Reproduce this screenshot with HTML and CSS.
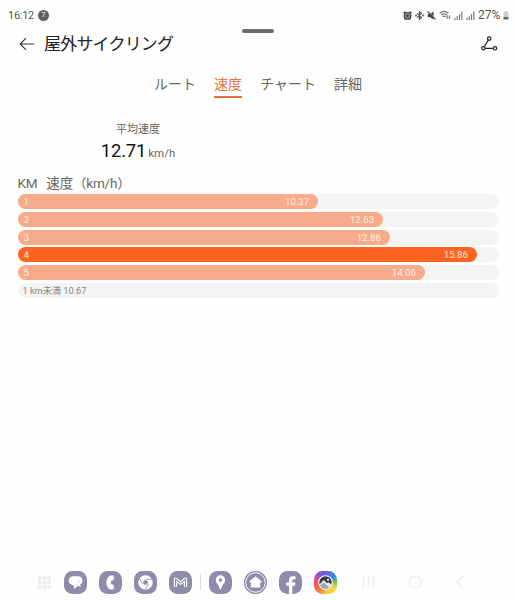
FILE: index.html
```html
<!DOCTYPE html>
<html lang="ja">
<head>
    <meta charset="UTF-8">
    <meta name="viewport" content="width=device-width, initial-scale=1.0">
    <title>屋外サイクリング</title>
    <link rel="stylesheet" href="styles.css">
</head>
<body>
    <div class="drag-handle"></div>

    <!-- Status bar -->
    <div class="status-bar">
        <div class="status-left">
            <span class="clock">16:12</span>
            <span class="notice">7</span>
        </div>
        <div class="status-right">
            <svg class="alarm" width="9" height="9" viewBox="0 0 9 9"><circle cx="4.5" cy="4.8" r="3.9" fill="#444"/><path d="M.6 2.2L2.4.6M8.4 2.2L6.6.6M1.6 8.6l1-1M7.4 8.6l-1-1" stroke="#444" stroke-width="1.4"/><circle cx="4.5" cy="4.8" r="2.1" fill="none" stroke="#ddd" stroke-width=".7"/></svg>
            <svg class="bluetooth" width="9" height="9" viewBox="0 0 9 9"><path d="M2 2.4l4.5 4L4.4 8.3V.7l2.1 1.9L2 6.6" fill="none" stroke="#555" stroke-width="1.2"/><circle cx="1" cy="4.5" r=".9" fill="#555"/><circle cx="8" cy="4.5" r=".9" fill="#555"/></svg>
            <svg class="mute" width="9" height="9" viewBox="0 0 9 9"><path d="M.8 3h2.2L6.6.6v8L3 6.2H.8z" fill="#444"/><path d="M1.2.2l8 8" stroke="#fefefe" stroke-width=".7"/><path d="M.5.4l8 8" stroke="#444" stroke-width="1.2"/></svg>
            <svg class="wifi" width="12" height="10" viewBox="0 0 12 10"><path d="M.7 3.2q4.3-3.8 8.8 0M2.2 5q2.9-2.4 5.8 0M3.8 6.7q1.3-1 2.6 0" fill="none" stroke="#777" stroke-width="1.2"/><path d="M8.2 9V5.5L7 6.7M10.3 5.2v3.5l1.2-1.2" fill="none" stroke="#666" stroke-width=".9"/></svg>
            <svg class="signal" width="9" height="9" viewBox="0 0 9 9"><path d="M1 9V7M3.2 9V5.3M5.5 9V3M7.8 9V.5" stroke="#777" stroke-width="1.2"/></svg>
            <svg class="signal" width="9" height="9" viewBox="0 0 9 9"><path d="M1 9V7M3.2 9V5.3M5.5 9V3M7.8 9V.5" stroke="#777" stroke-width="1.2"/></svg>
            <span class="battery-text">27%</span>
            <svg class="battery" width="6" height="9" viewBox="0 0 6 9"><path d="M2 0h2v1h1.3v5H.7V1H2z" fill="#ccc"/><path d="M.5 6h5v2.5h-5z" fill="#666"/></svg>
        </div>
    </div>

    <!-- Header -->
    <header class="header">
        <svg class="back" width="16" height="14" viewBox="0 0 16 14"><path d="M15 7H1.3M7 1.2L1.2 7 7 12.8" fill="none" stroke="#333" stroke-width="1.1"/></svg>
        <h1>屋外サイクリング</h1>
        <svg class="track" width="18" height="16" viewBox="0 0 18 16"><g fill="none" stroke="#222" stroke-width="1.2"><circle cx="9.2" cy="2.6" r="1.7"/><circle cx="3.4" cy="12.3" r="1.7"/><circle cx="15" cy="12.3" r="1.7"/><path d="M8.3 4.1l-4 6.7M5.1 12.3h8.2"/></g></svg>
    </header>

    <!-- Tabs -->
    <nav class="tabs">
        <span class="tab">ルート</span>
        <span class="tab active">速度</span>
        <span class="tab">チャート</span>
        <span class="tab">詳細</span>
    </nav>

    <main class="content">
        <div class="average">
            <div class="average-label">平均速度</div>
            <div class="average-value">12.71<span class="unit">km/h</span></div>
        </div>

        <div class="list-title"><span>KM</span><span>速度（km/h）</span></div>

        <!-- Splits -->
        <div class="splits">
            <div class="row"><div class="bar" style="width: 62.5%"><span>1</span><span>10.37</span></div></div>
            <div class="row"><div class="bar" style="width: 76%"><span>2</span><span>12.63</span></div></div>
            <div class="row"><div class="bar" style="width: 77.4%"><span>3</span><span>12.86</span></div></div>
            <div class="row"><div class="bar fastest" style="width: 95.5%"><span>4</span><span>15.86</span></div></div>
            <div class="row"><div class="bar" style="width: 84.7%"><span>5</span><span>14.06</span></div></div>
            <div class="row rest">1 km未満 10.67</div>
        </div>
    </main>

    <!-- Taskbar -->
    <footer class="taskbar">
        <svg class="apps" width="15" height="15" viewBox="0 0 15 15"><path d="M1 3h13M1 7.5h13M1 12h13" stroke="#ececec" stroke-width="3.4" stroke-dasharray="3.6 1.1"/></svg>

        <svg class="app" viewBox="0 0 23 23"><rect width="23" height="23" rx="8.5" fill="#8d8cab"/><path d="M9.5 5.3h4.6a4.3 4.3 0 0 1 2.2 8l.5 2.6-3-1.2-3.6 3.4-.4-3.4-3.3-1.8A4.2 4.2 0 0 1 9.5 5.3z" fill="#fff"/><path d="M14.8 9q1.2 3.8-3 4.7" fill="none" stroke="#c9c8d9" stroke-width=".7"/></svg>
        <svg class="app" viewBox="0 0 23 23"><rect width="23" height="23" rx="8.5" fill="#8d8cab"/><path d="M11 4.5h2.6q1.2 0 1.2 1.2v2.6q0 1.1-1.1 1.1h-1.4q-.6 2.1 0 4.2h1.4q1.1 0 1.1 1.1v2.6q0 1.2-1.2 1.2H11Q7.4 16 7.4 11.5T11 4.5z" fill="#fff"/></svg>
        <svg class="app" viewBox="0 0 23 23"><rect width="23" height="23" rx="8.5" fill="#8d8cab"/><circle cx="11.5" cy="11.5" r="7.2" fill="#fff"/><path d="M11.5 8.3h6.5M8.7 13.1L5.5 7.6M14.3 13.1l-3.1 5.5" stroke="#8d8cab" stroke-width=".9"/><circle cx="11.5" cy="11.5" r="2.8" fill="#8d8cab" stroke="#fff" stroke-width=".8"/></svg>
        <svg class="app" viewBox="0 0 23 23"><rect width="23" height="23" rx="8.5" fill="#8d8cab"/><path d="M6.5 15.8V8l5 4.1 5-4.1v7.8" fill="none" stroke="#fff" stroke-width="3.4" stroke-linejoin="round"/><path d="M6.5 15.5V8l5 4.1 5-4.1v7.5" fill="none" stroke="#8d8cab" stroke-width="1.1"/></svg>

        <span class="divider"></span>

        <svg class="app" viewBox="0 0 23 23"><rect width="23" height="23" rx="8.5" fill="#8d8cab"/><path d="M11.5 4.3a4.7 4.7 0 0 1 4.7 4.7c0 3.4-3.4 4.4-4.2 9.5h-1c-.8-5.1-4.2-6.1-4.2-9.5a4.7 4.7 0 0 1 4.7-4.7z" fill="#fff"/><circle cx="11.5" cy="9" r="1.7" fill="#8d8cab"/></svg>
        <svg class="app" viewBox="0 0 23 23"><circle cx="11.5" cy="11.5" r="11.5" fill="#8d8cab"/><circle cx="11.5" cy="11.5" r="9.8" fill="none" stroke="#fff" stroke-width="1"/><path d="M11.5 5.2l6.3 5.3-1 1.1-.6-.4v5.3H6.8v-5.3l-.6.4-1-1.1z" fill="#fff"/></svg>
        <svg class="app" viewBox="0 0 23 23"><rect width="23" height="23" rx="8.5" fill="#8d8cab"/><path d="M10 23v-8.3H7.2v-3.2H10V9.2q0-4 4.2-4h2.3v3h-1.7q-1.5 0-1.5 1.5v1.8h3.2l-.6 3.2h-2.6V23z" fill="#fff"/></svg>
        <div class="app gallery">
            <svg width="15" height="15" viewBox="0 0 15 15"><circle cx="7.5" cy="7.5" r="7.3" fill="#fff"/><circle cx="7.5" cy="7.5" r="6.2" fill="#34394c"/><circle cx="10" cy="4.8" r="1.1" fill="#fff"/><path d="M1.6 9.2L5.8 5l3.1 3.3 1.6-1.1 2.9 2.2a6.2 6.2 0 0 1-11.8-.2z" fill="#e6e8ed"/><path d="M2.2 10.5l3.6-3 5.6 4.9a6.2 6.2 0 0 1-9.2-1.9z" fill="#9fa4b2"/></svg>
        </div>

        <div class="nav-keys">
            <svg width="13" height="14" viewBox="0 0 13 14"><path d="M1.5 1v12M6.5 1v12M11.5 1v12" stroke="#efefef" stroke-width="1.8"/></svg>
            <svg width="14" height="14" viewBox="0 0 14 14"><rect x="1.5" y="1.5" width="11" height="11" rx="3.5" fill="none" stroke="#efefef" stroke-width="1.6"/></svg>
            <svg width="9" height="14" viewBox="0 0 9 14"><path d="M8 1L2 7l6 6" fill="none" stroke="#efefef" stroke-width="1.6"/></svg>
        </div>
    </footer>
</body>
</html>
```

FILE: styles.css
```css
/* Basic Styles */
* {
    box-sizing: border-box;
}

body {
    font-family: Roboto, "Noto Sans CJK JP", sans-serif;
    margin: 0;
    height: 600px;
    display: flex;
    flex-direction: column;
    background-color: #fefefe;
    color: #666;
    overflow: hidden;
}

svg {
    display: block;
    flex: none;
}

.drag-handle {
    position: absolute;
    top: 29px;
    left: 242px;
    width: 32px;
    height: 4px;
    border-radius: 2px;
    background-color: #6b6b6b;
}

/* Status Bar */
.status-bar {
    height: 30px;
    padding: 0 7px 0 8px;
    display: flex;
    justify-content: space-between;
    align-items: center;
    font-size: 11px;
    color: #555;
}

.status-left,
.status-right {
    display: flex;
    align-items: center;
}

.status-left {
    gap: 4px;
}

.clock {
    width: 26px;
    font-size: 11px;
    letter-spacing: -0.3px;
}

.notice {
    width: 11px;
    height: 11px;
    border-radius: 50%;
    background-color: #606060;
    color: white;
    font-size: 7px;
    line-height: 11px;
    text-align: center;
}

.status-right {
    gap: 3px;
}

.battery-text {
    width: 24px;
    font-size: 12px;
}

.battery {
    margin-left: -2px;
}

/* Header */
.header {
    height: 28px;
    padding: 0 18px 0 19px;
    display: flex;
    align-items: center;
}

.header h1 {
    margin: 0 0 0 9px;
    flex: 1;
    font-size: 17px;
    line-height: 28px;
    font-weight: 400;
    letter-spacing: -0.8px;
    color: #222;
}

/* Tabs */
.tabs {
    height: 40px;
    margin-top: 15px;
    display: flex;
    justify-content: center;
    align-items: flex-start;
    gap: 18px;
}

.tab {
    height: 25px;
    font-size: 14px;
    line-height: 23px;
}

.tab.active {
    color: #e8703c;
    border-bottom: 2px solid #e8703c;
}

/* Average Speed */
.content {
    padding: 8px 17.5px 0;
    flex: 1;
}

.average {
    width: 241px;
    text-align: center;
}

.average-label {
    font-size: 11px;
    line-height: 17px;
}

.average-value {
    margin-top: 1px;
    font-size: 18.5px;
    line-height: 24px;
    letter-spacing: -0.2px;
    color: #111;
}

.unit {
    margin-left: 2px;
    font-size: 11.5px;
    letter-spacing: 0;
    color: #666;
}

/* Splits */
.list-title {
    margin-top: 8px;
    display: flex;
    gap: 9px;
    font-size: 13.5px;
    line-height: 20px;
    letter-spacing: -0.2px;
}

.splits {
    margin-top: 1px;
    display: flex;
    flex-direction: column;
    gap: 2.8px;
}

.row {
    height: 15px;
    border-radius: 8px;
    background-color: #f4f4f4;
}

.bar {
    height: 15px;
    padding: 0 9px 0 6px;
    border-radius: 8px;
    display: flex;
    justify-content: space-between;
    background-color: #f8ab8a;
    color: #fff0e8;
    font-size: 9.6px;
    line-height: 16px;
}

.bar.fastest {
    background-color: #fc6420;
    color: #ffe6da;
}

.rest {
    padding-left: 5px;
    color: #888;
    font-size: 9.2px;
    line-height: 15px;
}

/* Taskbar */
.taskbar {
    height: 36px;
    padding-left: 37px;
    display: flex;
    align-items: center;
    gap: 12px;
}

.app {
    width: 23px;
    height: 23px;
    flex: none;
}

.divider {
    width: 1px;
    height: 16px;
    margin: 0 -4px;
    background-color: #ddd;
}

.gallery {
    border-radius: 8.5px;
    display: flex;
    align-items: center;
    justify-content: center;
    background: conic-gradient(#6a5be0, #3f8fe0 60deg, #63c94c 85deg, #f2da45 120deg, #f4cb3e 175deg, #f28a3c 210deg, #f2545b 260deg, #e95076 285deg, #8455e0 320deg, #6a5be0);
}

.nav-keys {
    margin-left: 13px;
    display: flex;
    gap: 33px;
}
```
